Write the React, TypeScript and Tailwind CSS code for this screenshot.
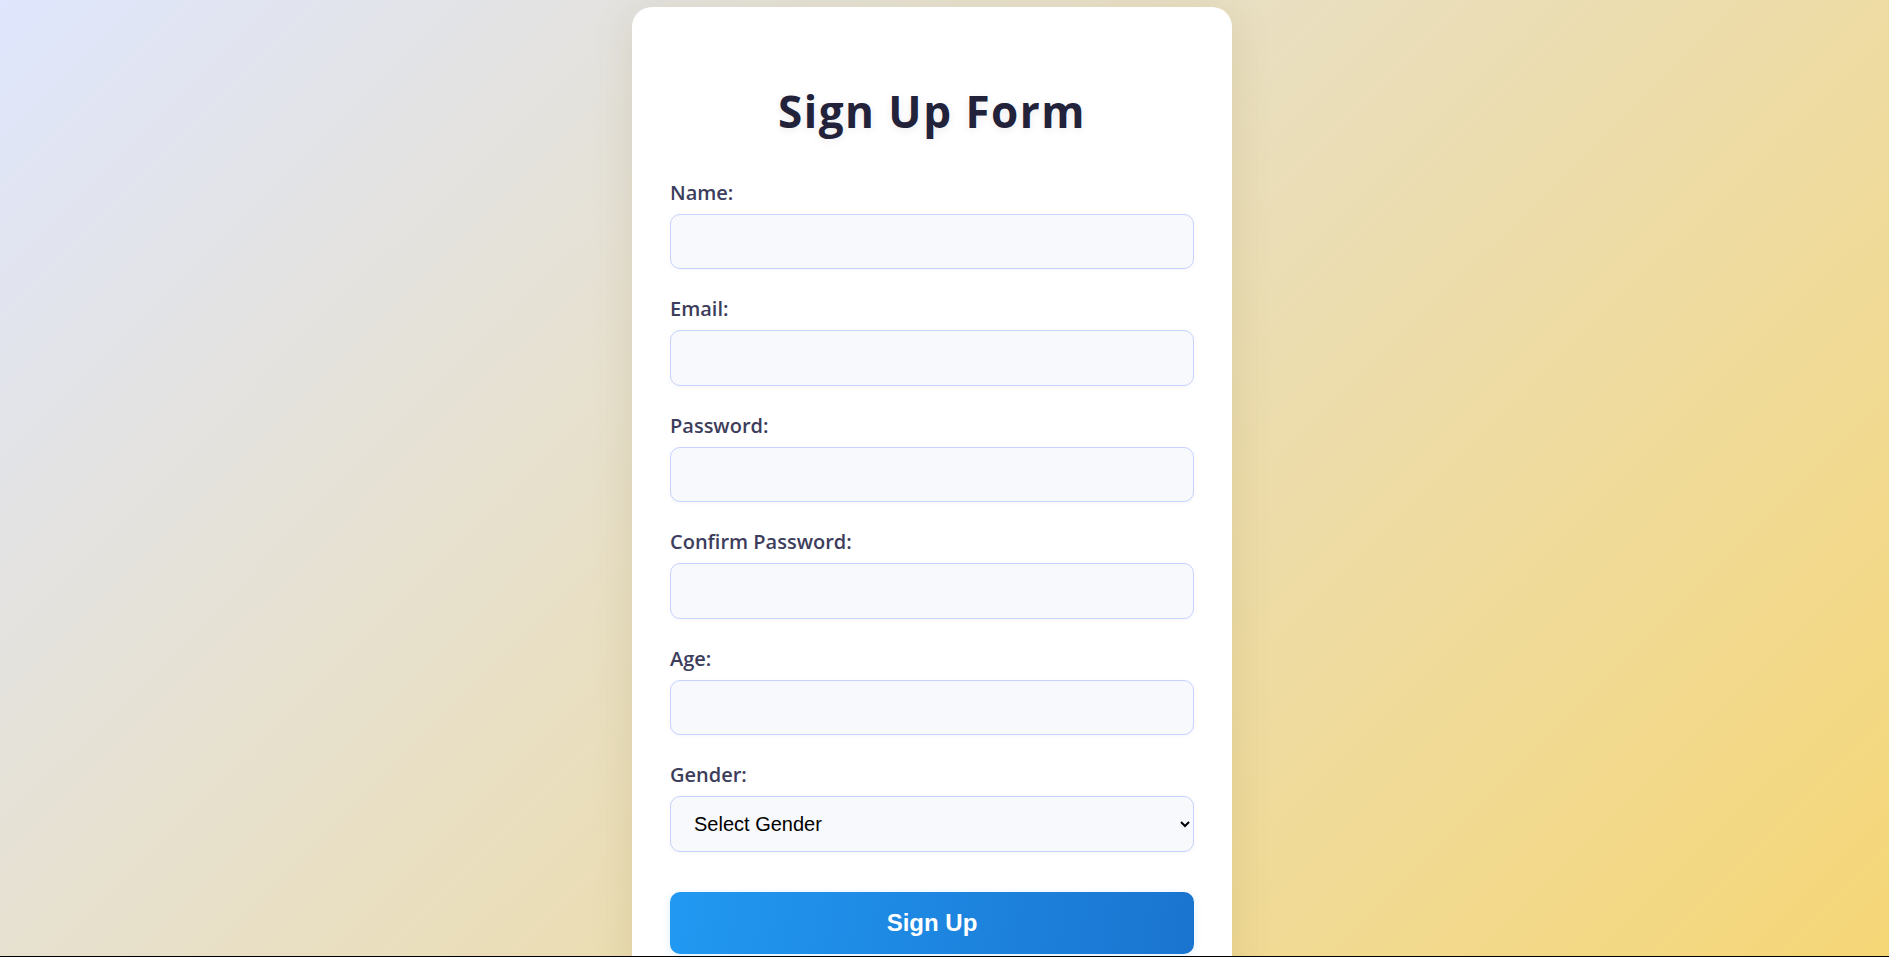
import React from "react";

const fields = [
  { id: "name", label: "Name:", type: "text" },
  { id: "email", label: "Email:", type: "email" },
  { id: "password", label: "Password:", type: "password" },
  { id: "confirm", label: "Confirm Password:", type: "password" },
  { id: "age", label: "Age:", type: "number" },
];

export default function App() {
  return (
    <div className="min-h-screen w-full bg-[linear-gradient(135deg,#dfe6fd_0%,#f6d673_100%)] font-['Open_Sans',sans-serif]">
      <div className="flex justify-center pr-[25px] pt-[7px] pb-[40px]">
        <form
          className="w-[600px] rounded-[20px] bg-white px-[38px] pt-[78px] pb-[40px] shadow-[0_8px_40px_rgba(120,100,40,0.15)]"
          onSubmit={(e) => e.preventDefault()}
        >
          <h1 className="mb-[44px] text-center text-[44px] leading-[52px] font-bold tracking-[1.5px] text-[#22223b] [text-shadow:0_2px_8px_rgba(0,0,0,0.08)]">
            Sign Up Form
          </h1>

          {fields.map((f) => (
            <div key={f.id} className="mb-[28px]">
              <label htmlFor={f.id} className="mb-[9px] block text-[20px] leading-[24px] font-semibold text-[#3d3d5c]">
                {f.label}
              </label>
              <input
                id={f.id}
                type={f.type}
                className="block h-[55.4px] w-full rounded-[10px] border border-[#c7d2fe] bg-[#f8f9fc] px-[18px] text-[19.2px] outline-none shadow-[0_1px_4px_rgba(100,110,200,0.06)]"
              />
            </div>
          ))}

          {/* Gender */}
          <div className="mb-[40px]">
            <label htmlFor="gender" className="mb-[9px] block text-[20px] leading-[24px] font-semibold text-[#3d3d5c]">
              Gender:
            </label>
            <select
              id="gender"
              defaultValue=""
              className="block h-[56px] w-full rounded-[10px] border border-[#c7d2fe] bg-[#f8f9fc] pl-[19px] pr-[4px] font-['Liberation_Sans',Arial,sans-serif] text-[20px] text-black outline-none shadow-[0_1px_4px_rgba(100,110,200,0.06)]"
            >
              <option value="">Select Gender</option>
              <option value="male">Male</option>
              <option value="female">Female</option>
              <option value="other">Other</option>
            </select>
          </div>

          <button
            type="submit"
            className="block h-[62px] w-full rounded-[10px] bg-[linear-gradient(100deg,#2199f2_0%,#1a74cf_100%)] font-['Liberation_Sans',Arial,sans-serif] text-[24px] font-bold text-white shadow-[0_2px_8px_rgba(33,150,243,0.15)]"
          >
            Sign Up
          </button>
        </form>
      </div>
      <div className="fixed bottom-0 left-0 h-[1.5px] w-full bg-black" />
    </div>
  );
}
